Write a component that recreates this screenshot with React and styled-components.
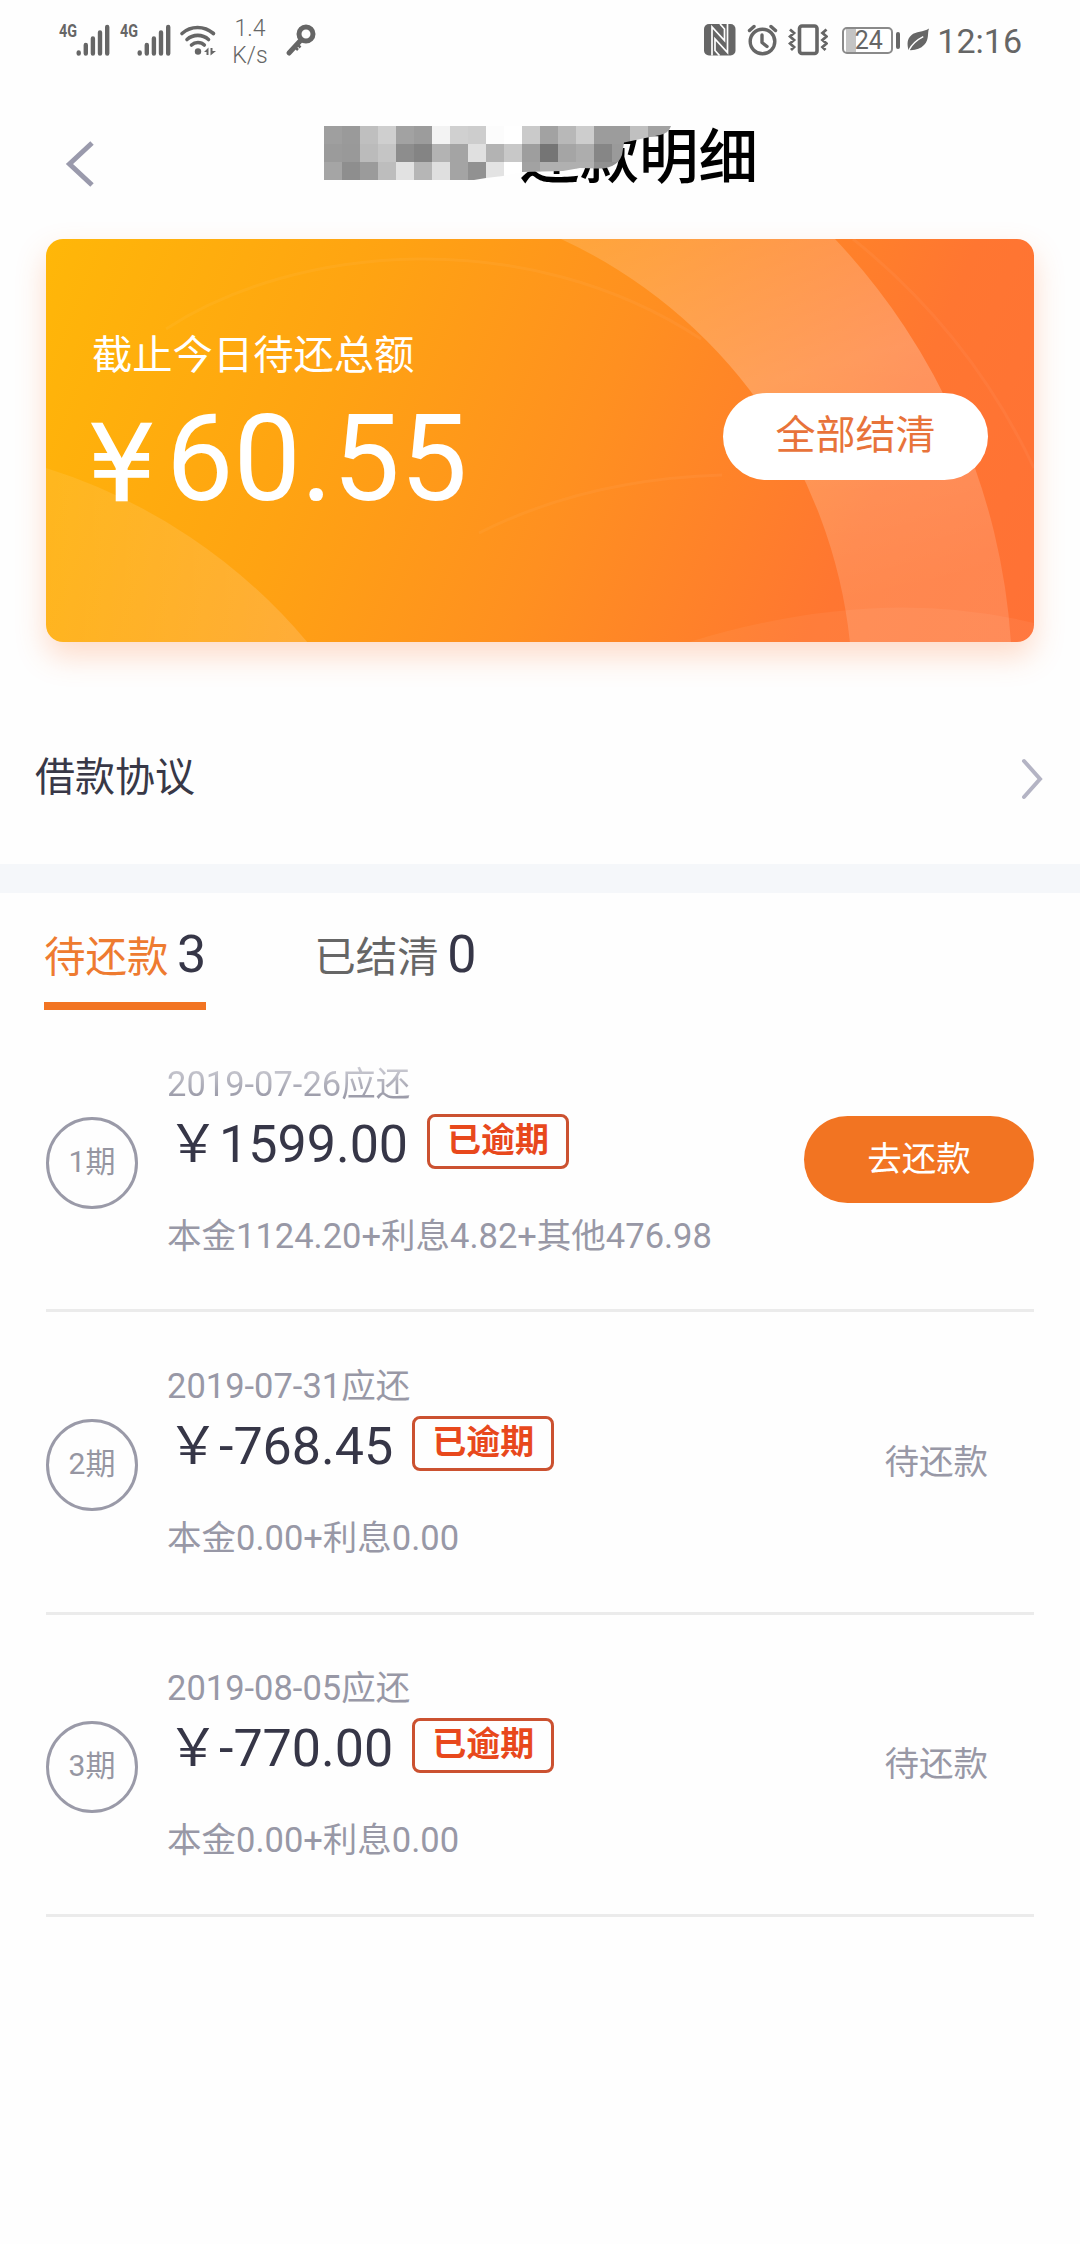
import React from "react";
import styled, { createGlobalStyle } from "styled-components";

const periods = [
  {
    id: 1,
    date: "2019-07-26",
    amount: "1599.00",
    detail: "本金1124.20+利息4.82+其他476.98",
    payable: true,
  },
  {
    id: 2,
    date: "2019-07-31",
    amount: "-768.45",
    detail: "本金0.00+利息0.00",
    payable: false,
  },
  {
    id: 3,
    date: "2019-08-05",
    amount: "-770.00",
    detail: "本金0.00+利息0.00",
    payable: false,
  },
];

// 标题前半部分的马赛克灰度
const mosaic = [
  "9f 9a bf cf a2 9c f3 d0 cd fc ff ca a2 b8 cd 9c 9c c0 a2 a2",
  "9b 99 bb c5 8d 84 b3 a4 e0 b3 c8 9e 75 a5 ad 86 9a ff ff ff",
  "a5 8e 9b bd e2 b6 df a4 91 e3 ff a2 b0 b0 b0 90 90 ff ff ff",
].map((line) => line.split(" "));

const Signal = () => (
  <svg width="54" height="44" viewBox="-2 -5 54 44">
    <text
      x="0"
      y="14"
      fontSize="18"
      fontWeight="700"
      fill="#666"
      textLength="18"
      lengthAdjust="spacingAndGlyphs"
    >
      4G
    </text>
    <g stroke="#666" strokeWidth="4.4" strokeLinecap="round">
      <path d="M19.7 29.5v1M26.8 22v8.5M33.9 15.5v15M41 9.5v21M48.2 4v26.5" />
    </g>
  </svg>
);

const Wifi = () => (
  <svg width="39" height="34" viewBox="0 0 39 34" fill="none">
    <g stroke="#666" strokeWidth="3.6" strokeLinecap="round">
      <path d="M3 10.5C12 2.5 25 2.5 34.5 10.5" />
      <path d="M8 16.5c6-5.5 15.5-5.5 21.5 0" />
      <path d="M12.5 22c3.5-3.3 9.5-3.3 12.8 0" />
    </g>
    <circle cx="19" cy="28.5" r="3.2" fill="#666" />
    <path d="M25 29l4.5-4.5V32h-2v-3zM31.5 25h2v3H37l-5.5 4.5z" fill="#666" />
  </svg>
);

const Key = () => (
  <svg width="32" height="34" viewBox="0 0 32 34" fill="none">
    <circle cx="21" cy="11" r="7" stroke="#666" strokeWidth="5" />
    <path d="M16 17L4 30" stroke="#666" strokeWidth="5" strokeLinecap="round" />
    <path d="M9 23l4 4M12 21l3.5 3.5" stroke="#666" strokeWidth="2.5" />
  </svg>
);

const Nfc = () => (
  <svg width="36" height="32" viewBox="0 0 36 32">
    <rect width="31.5" height="31.5" rx="5" fill="#666" />
    <path
      d="M8 31.5V3L20.5 16.5V5L16 0M23.5 0V28.5L11 15V26.5L15.5 31.5"
      fill="none"
      stroke="#fff"
      strokeWidth="1.7"
    />
  </svg>
);

const Alarm = () => (
  <svg width="34" height="32" viewBox="0 0 34 32" fill="none" stroke="#666">
    <circle cx="15.5" cy="17.5" r="12.3" strokeWidth="3.4" />
    <path
      d="M15 11v7.5l5 4M2.5 6.5l4.5-4M28.5 6.5l-4.5-4"
      strokeWidth="3.4"
      strokeLinecap="round"
      strokeLinejoin="round"
    />
  </svg>
);

const Vibrate = () => (
  <svg width="40" height="32" viewBox="0 0 40 32" fill="none" stroke="#666">
    <rect x="11.5" y="2" width="17.5" height="27.5" rx="2.5" strokeWidth="3.6" />
    <path
      d="M2 5.5l4 3.5-4 3.5 4 3.5-4 3.5 4 3.5-3 3M38.5 5.5l-4 3.5 4 3.5-4 3.5 4 3.5-4 3.5 3 3"
      strokeWidth="2.8"
    />
  </svg>
);

const Leaf = () => (
  <svg width="23" height="26" viewBox="0 0 24 26">
    <path
      d="M23 1C21 6 23.5 12 18 18c-4 4.5-9.5 6-16.5 5.5C0 17 0 12 4.5 8 9.5 3.5 17 5 23 1z"
      fill="#666"
    />
    <path d="M2 23.5C6 16 11 12.5 17 9.5" fill="none" stroke="#fff" strokeWidth="1.4" />
  </svg>
);

const TitleMosaic = () => (
  <MosaicSvg viewBox="0 0 360 54">
    <defs>
      <clipPath id="smear">
        <path d="M0 0H347Q345 7 336 9L326 11L300 16.5L298 29Q295 37 288 40Q282 43 272 42.5L256 42L239 45L198 46L179 50L162 52L150 54H0Z" />
      </clipPath>
    </defs>
    <g clipPath="url(#smear)">
      {mosaic.map((line, y) =>
        line.map((tone, x) => (
          <rect
            key={`${x}-${y}`}
            x={x * 18}
            y={y * 18}
            width="18.3"
            height="18.3"
            fill={`#${tone}${tone}${tone}`}
          />
        ))
      )}
    </g>
  </MosaicSvg>
);

const CardArt = () => (
  <CardArtSvg viewBox="0 0 988 403" preserveAspectRatio="none">
    <defs>
      <linearGradient id="ring" x1="0" y1="0" x2="0.3" y2="1">
        <stop offset="0" stopColor="#fff" stopOpacity="0.14" />
        <stop offset="0.45" stopColor="#fff" stopOpacity="0.23" />
        <stop offset="1" stopColor="#fff" stopOpacity="0.14" />
      </linearGradient>
      <linearGradient id="corner" x1="0" y1="0" x2="1" y2="0">
        <stop offset="0" stopColor="#fff" stopOpacity="0.08" />
        <stop offset="1" stopColor="#fff" stopOpacity="0.15" />
      </linearGradient>
    </defs>
    <path d="M515 0A501 501 0 0 1 804 404H965A650 650 0 0 0 789 0Z" fill="url(#ring)" />
    <path d="M0 229A560 560 0 0 1 262 404H0Z" fill="url(#corner)" />
    <path d="M640 404Q830 345 988 384V404Z" fill="#fff" opacity="0.05" />
    <g fill="none" stroke="#fff" strokeOpacity="0.045" strokeWidth="3">
      <path d="M807 0Q925 95 988 229" />
      <path d="M120 90C250 5 480 -15 655 100" />
      <path d="M433 294Q540 240 676 236" />
    </g>
  </CardArtSvg>
);

const App = () => {
  return (
    <Page>
      <GlobalStyle />
      <StatusBar>
        <StatusGroup>
          <Signal />
          <Signal />
          <Wifi />
          <Speed>
            <span>1.4</span>
            <span>K/s</span>
          </Speed>
          <Key />
        </StatusGroup>
        <StatusGroup>
          <Nfc />
          <Alarm />
          <Vibrate />
          <Battery>
            <BatteryBody>24</BatteryBody>
            <BatteryTip />
          </Battery>
          <Leaf />
          <Clock>12:16</Clock>
        </StatusGroup>
      </StatusBar>

      <NavBar>
        <BackButton aria-label="返回">
          <svg width="30" height="46" viewBox="0 0 30 46" fill="none">
            <path d="M28 2L5.5 23L28 44" stroke="#9a9aac" strokeWidth="5" />
          </svg>
        </BackButton>
        <TitleWrap>
          <Title>还款明细</Title>
          <TitleMosaic />
        </TitleWrap>
      </NavBar>

      <Card>
        <CardArt />
        <CardInfo>
          <CardLabel>截止今日待还总额</CardLabel>
          <CardAmount>
            <Yen>¥</Yen>60.55
          </CardAmount>
        </CardInfo>
        <SettleButton>全部结清</SettleButton>
      </Card>

      <Agreement>
        <span>借款协议</span>
        <svg width="24" height="44" viewBox="0 0 24 44" fill="none">
          <path
            d="M4 4L20 22L4 40"
            stroke="#b4b4c4"
            strokeWidth="4"
            strokeLinecap="round"
          />
        </svg>
      </Agreement>
      <Divider />

      <Tabs>
        <Tab $active>
          待还款<Count>3</Count>
        </Tab>
        <Tab>
          已结清<Count>0</Count>
        </Tab>
      </Tabs>

      <List>
        {periods.map((item) => (
          <Row key={item.id}>
            <Period>{item.id}期</Period>
            <RowInfo>
              <DueDate $faded={item.id === 1}>{item.date}应还</DueDate>
              <AmountLine>
                ￥{item.amount}
                <Overdue>已逾期</Overdue>
              </AmountLine>
              <Detail>{item.detail}</Detail>
            </RowInfo>
            {item.payable ? <PayButton>去还款</PayButton> : <Pending>待还款</Pending>}
          </Row>
        ))}
      </List>
    </Page>
  );
};

const GlobalStyle = createGlobalStyle`
  * {
    box-sizing: border-box;
  }
  body {
    margin: 0;
    background: #fefefe;
    font-family: Roboto, "Noto Sans CJK SC", sans-serif;
  }
  button {
    border: none;
    padding: 0;
    font-family: inherit;
    cursor: pointer;
  }
  svg {
    display: block;
    flex-shrink: 0;
  }
`;

const Page = styled.div`
  width: 1080px;
  height: 2244px;
  overflow: hidden;
  background: #fefefe;
`;

const StatusBar = styled.div`
  display: flex;
  justify-content: space-between;
  align-items: center;
  height: 80px;
  padding: 0 58px 0 57px;
  color: #666;
`;

const StatusGroup = styled.div`
  display: flex;
  align-items: center;
  gap: 7px;
`;

const Speed = styled.div`
  display: flex;
  flex-direction: column;
  width: 40px;
  margin: 3px 8px 0 5px;
  font-size: 23px;
  font-weight: 300;
  line-height: 27px;
  text-align: center;
`;

const Battery = styled.div`
  display: flex;
  align-items: center;
  gap: 3px;
  margin-left: 7px;
`;

const BatteryBody = styled.div`
  width: 51px;
  height: 27px;
  padding-left: 2px;
  border: 2px solid #8a8a8a;
  border-radius: 5px;
  background: linear-gradient(90deg, #fff 2px, #c4c4c4 2px, #c4c4c4 12px, #fff 12px);
  font-size: 25px;
  line-height: 23px;
  text-align: center;
`;

const BatteryTip = styled.div`
  width: 4px;
  height: 17px;
  border-radius: 2px;
  background: #666;
`;

const Clock = styled.div`
  font-size: 34px;
  line-height: 40px;
  padding-top: 2px;
`;

const NavBar = styled.div`
  display: flex;
  align-items: flex-start;
  height: 159px;
  padding-left: 64px;
`;

const BackButton = styled.button`
  margin-top: 61px;
  background: none;
`;

const TitleWrap = styled.div`
  position: relative;
  margin: 36px 0 0 227px;
  padding-left: 199px;
`;

const Title = styled.h1`
  margin: 0;
  color: #000;
  font-size: 59.5px;
  font-weight: 500;
  line-height: 84px;
`;

const MosaicSvg = styled.svg`
  position: absolute;
  top: 10px;
  left: 3px;
  width: 360px;
  height: 54px;
`;

const Card = styled.div`
  position: relative;
  display: flex;
  justify-content: space-between;
  align-items: flex-start;
  height: 403px;
  margin: 0 46px;
  padding: 0 46px;
  border-radius: 17px;
  background: linear-gradient(
    112deg,
    #ffb708 0%,
    #ffa312 30%,
    #ff9020 54%,
    #ff7631 81%,
    #ff7136 100%
  );
  box-shadow: 0 14px 30px rgba(255, 120, 50, 0.26);
`;

const CardArtSvg = styled.svg`
  position: absolute;
  inset: 0;
  width: 100%;
  height: 100%;
  border-radius: 17px;
`;

const CardInfo = styled.div`
  position: relative;
  padding-top: 89px;
  color: #fff;
`;

const CardLabel = styled.div`
  font-size: 40.3px;
  line-height: 56px;
`;

const CardAmount = styled.div`
  margin-top: 5px;
  font-size: 120px;
  line-height: 140px;
`;

const Yen = styled.span`
  display: inline-block;
  width: 78px;
  margin-left: -4px;
  font-family: "DejaVu Sans", sans-serif;
  font-size: 106px;
  line-height: 1;
  -webkit-text-stroke: 1.5px #fff;
`;

const SettleButton = styled.button`
  position: relative;
  width: 265px;
  height: 87px;
  margin-top: 154px;
  padding-bottom: 9px;
  border-radius: 44px;
  background: #fff;
  color: #e8733a;
  font-size: 40px;
`;

const Agreement = styled.div`
  display: flex;
  justify-content: space-between;
  align-items: center;
  height: 222px;
  padding: 52px 36px 0 35px;
  color: #383847;
  font-size: 40px;

  span {
    padding-bottom: 10px;
  }
`;

const Divider = styled.div`
  height: 29px;
  background: #f5f7fa;
`;

const Tabs = styled.div`
  display: flex;
  gap: 108px;
  height: 117px;
  padding: 0 44px;
`;

const Tab = styled.div`
  padding-top: 32px;
  border-bottom: 8px solid ${(props) => (props.$active ? "#f27422" : "transparent")};
  color: ${(props) => (props.$active ? "#ee7b30" : "#666")};
  font-size: 41.5px;
  line-height: 60px;
`;

const Count = styled.span`
  margin-left: 8.5px;
  color: #363647;
  font-size: 52px;
  line-height: 60px;
`;

const List = styled.div`
  margin: 0 46px;
`;

const Row = styled.div`
  display: flex;
  align-items: center;
  height: 302.3px;
  border-bottom: 3px solid #ebebeb;
`;

const Period = styled.div`
  width: 92px;
  height: 92px;
  margin-top: 6px;
  border: 3px solid #9a9aa8;
  border-radius: 50%;
  color: #9696a2;
  font-size: 30px;
  line-height: 84px;
  text-align: center;
`;

const RowInfo = styled.div`
  flex: 1;
  margin-left: 29px;
`;

const DueDate = styled.div`
  width: fit-content;
  color: #9898a6;
  font-size: 34.5px;
  line-height: 44px;
  ${(props) =>
    props.$faded &&
    `
    background: linear-gradient(#c8c8d0 15%, #9898a6 85%);
    background-clip: text;
    color: transparent;
  `}
`;

const AmountLine = styled.div`
  display: flex;
  align-items: center;
  height: 60px;
  margin: 9px 0 39px;
  color: #363647;
  font-size: 52px;
  line-height: 60px;
`;

const Overdue = styled.span`
  width: 142px;
  height: 55px;
  margin: 0 0 7px 19px;
  border: 3px solid #cb5130;
  border-radius: 8px;
  color: #e8481c;
  font-size: 34px;
  font-weight: 700;
  line-height: 47px;
  text-align: center;
`;

const Detail = styled.div`
  color: #9898a6;
  font-size: 34.5px;
  line-height: 44px;
`;

const PayButton = styled.button`
  width: 230px;
  height: 87px;
  padding-bottom: 8px;
  border-radius: 44px;
  background: #f27422;
  color: #fff;
  font-size: 34.5px;
`;

const Pending = styled.div`
  padding-right: 46px;
  color: #9898a6;
  font-size: 34.5px;
  line-height: 46px;
`;

export default App;
